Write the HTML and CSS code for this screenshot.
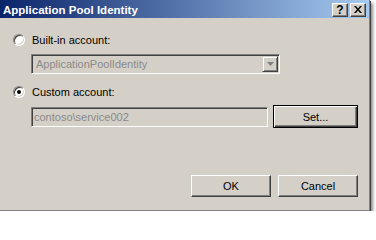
FILE: index.html
```html
<!DOCTYPE html>
<html>
<head>
<meta charset="utf-8">
<title>Application Pool Identity</title>
<link rel="stylesheet" href="styles.css">
</head>
<body>
<div class="window">
  <div class="titlebar">
    <span class="title">Application Pool Identity</span>
    <div class="caption-buttons">
      <button class="cap-btn help">?</button>
      <button class="cap-btn close">
        <svg width="8" height="7" viewBox="0 0 8 7"><path d="M0 0h2l2 2.5L6 0h2L5 3.5 8 7H6L4 4.5 2 7H0l3-3.5z" fill="#000"/></svg>
      </button>
    </div>
  </div>
  <div class="content">
    <label class="radio-row">
      <span class="radio"></span>
      <span>Built-in account:</span>
    </label>
    <div class="combo indent">
      <span class="disabled-text">ApplicationPoolIdentity</span>
      <span class="combo-btn">
        <svg width="7" height="4" viewBox="0 0 7 4"><path d="M0 0h7L3.5 4z" fill="#808080"/></svg>
      </span>
    </div>
    <label class="radio-row second">
      <span class="radio checked"></span>
      <span>Custom account:</span>
    </label>
    <div class="field-row indent">
      <div class="field"><span class="disabled-text">contoso\service002</span></div>
      <button class="btn default set">Set...</button>
    </div>
    <div class="footer">
      <button class="btn">OK</button>
      <button class="btn">Cancel</button>
    </div>
  </div>
</div>
</body>
</html>
```

FILE: styles.css
```css
html, body {
  margin: 0;
  padding: 0;
  background: #ffffff;
}

body {
  font-family: "Liberation Sans", Arial, sans-serif;
  font-size: 11px;
  color: #000;
}

.window {
  width: 369px;
  height: 210px;
  background: #d4d0c8;
  border-right: 1px solid #808080;
  border-bottom: 1px solid #808080;
  box-shadow: 1px 1px 0 #404040, 3px 3px 3px rgba(0, 0, 0, 0.45);
  display: flex;
  flex-direction: column;
}

.titlebar {
  height: 18px;
  flex: none;
  display: flex;
  align-items: center;
  justify-content: space-between;
  padding: 0 3px 0 3px;
  background: linear-gradient(to right, #0a246a 0%, #a6caf0 100%);
}

.title {
  color: #fff;
  font-weight: bold;
  font-size: 11.5px;
  line-height: 18px;
  margin-top: 1px;
}

.caption-buttons {
  display: flex;
  gap: 2px;
  margin-top: 1px;
}

.cap-btn {
  appearance: none;
  width: 16px;
  height: 14px;
  padding: 0;
  margin: 0;
  background: #d4d0c8;
  border: 1px solid;
  border-color: #fff #404040 #404040 #fff;
  box-shadow: inset -1px -1px #808080;
  display: flex;
  align-items: center;
  justify-content: center;
  font-family: "Liberation Sans", Arial, sans-serif;
  font-weight: bold;
  font-size: 12px;
  line-height: 12px;
  color: #000;
}

.content {
  flex: 1;
  padding: 16px 11px 0 13px;
  display: flex;
  flex-direction: column;
}

.radio-row {
  display: flex;
  align-items: center;
  gap: 7px;
  height: 12px;
}

.radio-row.second {
  margin-top: 12px;
}

.radio {
  box-sizing: border-box;
  width: 12px;
  height: 12px;
  border-radius: 50%;
  background: #fff;
  border: 1px solid;
  border-color: #808080 #fff #fff #808080;
  box-shadow: inset 1px 1px #404040, inset -1px -1px #d4d0c8;
  position: relative;
  flex: none;
}

.radio.checked::after {
  content: "";
  position: absolute;
  left: 3px;
  top: 3px;
  width: 4px;
  height: 4px;
  border-radius: 50%;
  background: #000;
}

.indent {
  margin-left: 18px;
}

.combo {
  box-sizing: border-box;
  margin-top: 8px;
  width: 249px;
  height: 20px;
  border: 1px solid;
  border-color: #808080 #fff #fff #808080;
  box-shadow: inset 1px 1px #404040, inset -1px -1px #d4d0c8;
  display: flex;
  align-items: center;
  justify-content: space-between;
  padding: 1px 1px 1px 4px;
}

.combo-btn {
  box-sizing: border-box;
  width: 16px;
  height: 16px;
  background: #d4d0c8;
  border: 1px solid;
  border-color: #d4d0c8 #404040 #404040 #d4d0c8;
  box-shadow: inset 1px 1px #fff, inset -1px -1px #808080;
  display: flex;
  align-items: center;
  justify-content: center;
}

.disabled-text {
  color: #8a8a8a;
}

.field-row {
  margin-top: 7px;
  display: flex;
  align-items: center;
  gap: 5px;
}

.field {
  box-sizing: border-box;
  width: 237px;
  height: 20px;
  border: 1px solid;
  border-color: #808080 #fff #fff #808080;
  box-shadow: inset 1px 1px #404040, inset -1px -1px #d4d0c8;
  display: flex;
  align-items: center;
  padding-left: 2px;
}

.btn {
  appearance: none;
  box-sizing: border-box;
  width: 80px;
  height: 22px;
  margin: 0;
  padding: 0;
  background: #d4d0c8;
  border: 1px solid;
  border-color: #fff #404040 #404040 #fff;
  box-shadow: inset -1px -1px #808080;
  font-family: "Liberation Sans", Arial, sans-serif;
  font-size: 11px;
  color: #000;
}

.btn.default {
  width: 85px;
  height: 23px;
  border: 1px solid #000;
  box-shadow: inset 1px 1px #fff, inset -1px -1px #404040, inset -2px -2px #808080;
}

.footer {
  margin-top: 47px;
  display: flex;
  justify-content: flex-end;
  gap: 7px;
}
```
